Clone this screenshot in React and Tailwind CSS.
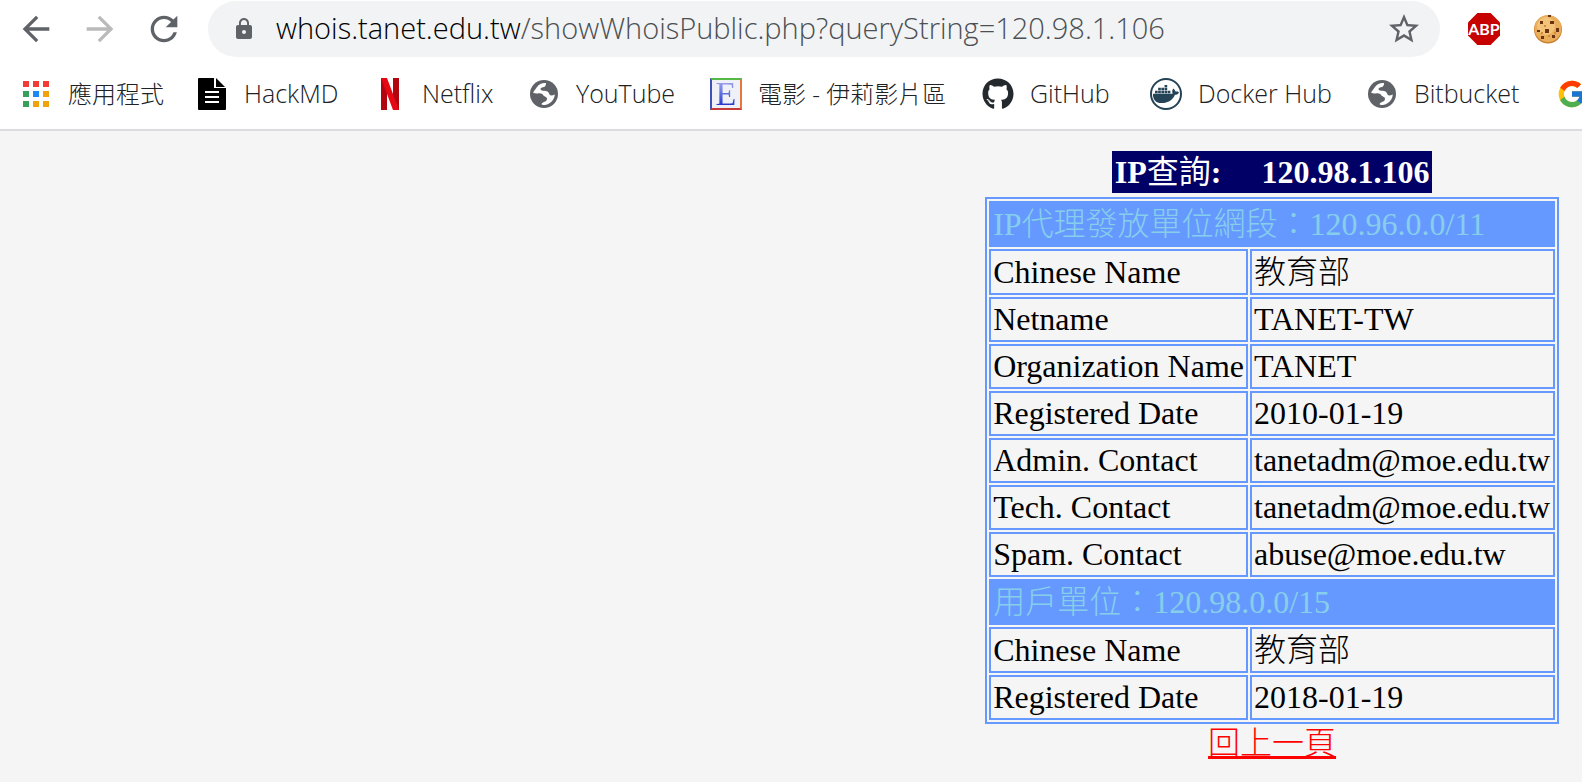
import React from 'react';
import { MdArrowBack, MdArrowForward, MdRefresh, MdLock, MdStarBorder } from 'react-icons/md';
import { FaGithub, FaDocker } from 'react-icons/fa';
import { FcGoogle } from 'react-icons/fc';

const GlobeIcon = () => (
  <svg viewBox="0 0 32 32" className="h-8 w-8">
    <circle cx="16" cy="16" r="14" fill="#5f6368" />
    <path
      d="M5 14.500L9 9C11 6 14.500 4.600 18 5C18 8 17 9 14 9.500C12.500 10 12 11 13 12C14 13 16 12.500 18 13C20.500 13.500 21 15 21.500 16.500C22.500 18 24.500 17.500 26.800 16.500C26.500 21.500 23 25.500 18 26.800C13.500 27.500 12.500 26 15 24.500C17 23.500 19 23 19 21C19 18.500 16.500 19 15.500 17.500C14.500 15.500 12 15 10 15.500C8 15.800 6.500 15.500 5 14.500Z"
      fill="#fff"
    />
  </svg>
);

const AppsIcon = () => (
  <svg viewBox="0 0 32 32" className="h-8 w-8">
    <path d="M3 3h6v6H3zM13 3h6v6h-6zM23 3h6v6h-6z" fill="#f53b36" />
    <path d="M3 13h6v6H3zM3 23h6v6H3z" fill="#34a05a" />
    <path d="M13 13h6v6h-6z" fill="#1e88f5" />
    <path d="M23 13h6v6h-6zM13 23h6v6h-6zM23 23h6v6h-6z" fill="#f0a30a" />
  </svg>
);

const HackMDIcon = () => (
  <svg viewBox="0 0 32 32" className="h-8 w-8">
    <path d="M3 0h15v10h12v21a1 1 0 0 1-1 1H3a1 1 0 0 1-1-1V1a1 1 0 0 1 1-1z" />
    <path d="M20 0l9 9h-9z" />
    <path d="M9 14h14M9 19h14M9 24h14" stroke="#fff" strokeWidth="2" />
  </svg>
);

const NetflixIcon = () => (
  <svg viewBox="0 0 32 32" className="h-8 w-8">
    <path d="M7 0h6v32l-6 0zM19 0h6v32h-6z" fill="#b1060f" />
    <path d="M7 0h6l12 32h-6z" fill="#e50914" />
  </svg>
);

const MovieIcon = () => (
  <span className="flex h-8 w-8 items-center justify-center border-2 border-t-[#55b948] border-r-[#e8763a] border-b-[#c43c35] border-l-[#3f51b5] bg-[#eef1f8]">
    <span className="bg-linear-to-b from-[#a9a9ee] to-[#2020c8] bg-clip-text font-['Liberation_Serif',serif] text-[34px] leading-7 font-normal text-transparent">
      E
    </span>
  </span>
);

const GithubIcon = () => <FaGithub className="h-8 w-8 text-[#24292e]" />;

const DockerIcon = () => (
  <span className="flex h-8 w-8 items-center justify-center rounded-full border-2 border-[#254356]">
    <FaDocker className="h-[26px] w-[26px] text-[#254356]" />
  </span>
);

const GoogleIcon = () => <FcGoogle className="h-8 w-8" />;

const AdblockIcon = () => (
  <svg viewBox="0 0 32 32" className="h-8 w-8">
    <path d="M9.400 0h13.200L32 9.400v13.200L22.600 32H9.400L0 22.600V9.400z" fill="#c70000" />
    <text
      x="16"
      y="22"
      textAnchor="middle"
      fontFamily="Lato, sans-serif"
      fontSize="16"
      fontWeight="700"
      fill="#fff"
    >
      ABP
    </text>
  </svg>
);

const CookieIcon = () => (
  <svg viewBox="0 0 32 32" className="h-8 w-8">
    <circle cx="16" cy="16.500" r="14" fill="#c98232" />
    <circle cx="16" cy="15.500" r="13.500" fill="#e9ad5c" />
    <circle cx="14" cy="13" r="9" fill="#f2c379" />
    <path
      d="M8 8h3v3H8zM18 8h4v3h-4zM13 16h4v4h-4zM24 15h3v4h-3zM5 17h3v2H5zM20 22h3v3h-3zM9 23h3v3H9zM16 2h3v2h-3z"
      fill="#6b3410"
    />
    <path d="M12 12h2v2h-2zM9 19h2v2H9zM22 19h2v2h-2zM16 22h2v2h-2z" fill="#cf8d3d" />
  </svg>
);

const bookmarks = [
  { label: '應用程式', icon: AppsIcon, width: 'w-[176px]', cjk: true },
  { label: 'HackMD', icon: HackMDIcon, width: 'w-[178px]' },
  { label: 'Netflix', icon: NetflixIcon, width: 'w-[154px]' },
  { label: 'YouTube', icon: GlobeIcon, width: 'w-[182px]' },
  { label: '電影 - 伊莉影片區', icon: MovieIcon, width: 'w-[272px]', cjk: true },
  { label: 'GitHub', icon: GithubIcon, width: 'w-[168px]' },
  { label: 'Docker Hub', icon: DockerIcon, width: 'w-[216px]' },
  { label: 'Bitbucket', icon: GlobeIcon, width: 'w-[190px]' },
  { label: 'Google', icon: GoogleIcon, width: 'w-8', iconOnly: true },
];

const sections = [
  {
    title: 'IP代理發放單位網段：120.96.0.0/11',
    rows: [
      ['Chinese Name', '教育部'],
      ['Netname', 'TANET-TW'],
      ['Organization Name', 'TANET'],
      ['Registered Date', '2010-01-19'],
      ['Admin. Contact', 'tanetadm@moe.edu.tw'],
      ['Tech. Contact', 'tanetadm@moe.edu.tw'],
      ['Spam. Contact', 'abuse@moe.edu.tw'],
    ],
  },
  {
    title: '用戶單位：120.98.0.0/15',
    rows: [
      ['Chinese Name', '教育部'],
      ['Registered Date', '2018-01-19'],
    ],
  },
];

function Toolbar() {
  return (
    <div className="flex h-[58px] items-center pr-[18px] pl-4">
      <div className="flex gap-6 text-[#5f6368]">
        <button aria-label="Back"><MdArrowBack className="h-10 w-10" /></button>
        <button aria-label="Forward" disabled className="text-[#bababa]"><MdArrowForward className="h-10 w-10" /></button>
        <button aria-label="Reload"><MdRefresh className="h-10 w-10" /></button>
      </div>
      <div className="ml-6 flex h-14 min-w-0 flex-1 items-center rounded-full bg-[#f1f3f4] pr-[18px] pl-6">
        <MdLock className="h-6 w-6 shrink-0 text-[#5f6368]" />
        <div className="ml-5 flex-1 truncate pb-[2px] text-[29px] leading-10 text-[#4c4f53]">
          <span className="text-black">whois.tanet.edu.tw</span>
          /showWhoisPublic.php?queryString=120.98.1.106
        </div>
        <button aria-label="Bookmark this page"><MdStarBorder className="h-9 w-9 text-[#5f6368]" /></button>
      </div>
      <div className="ml-7 flex gap-8">
        <button aria-label="Adblock Plus"><AdblockIcon /></button>
        <button aria-label="Cookies"><CookieIcon /></button>
      </div>
    </div>
  );
}

function App() {
  return (
    <div className="min-h-screen overflow-hidden bg-[#f5f5f5] font-light">
      <header className="border-b-2 border-[#dadce0] bg-white font-['Open_Sans','Noto_Sans_CJK_TC',sans-serif]">
        <Toolbar />
        <nav className="flex h-[71px] items-center overflow-hidden pl-5">
          {bookmarks.map(({ label, icon: Icon, width, cjk, iconOnly }) => (
            <a
              key={label}
              href="#"
              aria-label={label}
              className={`${width} flex shrink-0 items-center gap-4 whitespace-nowrap text-[#202124]`}
            >
              <Icon />
              {!iconOnly && <span className={cjk ? 'text-[24px]' : 'text-[25px]'}>{label}</span>}
            </a>
          ))}
        </nav>
      </header>

      <main className="flex justify-end pt-5 pr-[23px] font-['Liberation_Serif','Noto_Sans_CJK_TC',serif] text-[32px] text-black">
        <div className="flex flex-col items-center">
          <h1 className="mb-1 bg-[#000066] px-[3px] leading-[42px] font-bold whitespace-pre text-white">
            IP<span className="font-normal">查詢</span>{':     120.98.1.106'}
          </h1>
          <table className="border-separate border-spacing-[2px] border-2 border-[#6699ff] leading-[37px]">
            {sections.map((section) => (
              <tbody key={section.title}>
                <tr className="leading-[38px]">
                  <th colSpan={2} className="border-2 border-[#6699ff] bg-[#6699ff] p-[2px] text-left font-light text-[#87ceeb]">
                    {section.title}
                  </th>
                </tr>
                {section.rows.map(([name, value]) => (
                  <tr key={name} className={name === 'Chinese Name' ? 'leading-[38px]' : ''}>
                    <td className="border-2 border-[#6699ff] p-[2px]">{name}</td>
                    <td className="min-w-[305px] border-2 border-[#6699ff] p-[2px]">{value}</td>
                  </tr>
                ))}
              </tbody>
            ))}
          </table>
          <a href="#" className="leading-[38px] text-[#ff0000] underline decoration-[3px]">回上一頁</a>
        </div>
      </main>
    </div>
  );
}

export default App;
